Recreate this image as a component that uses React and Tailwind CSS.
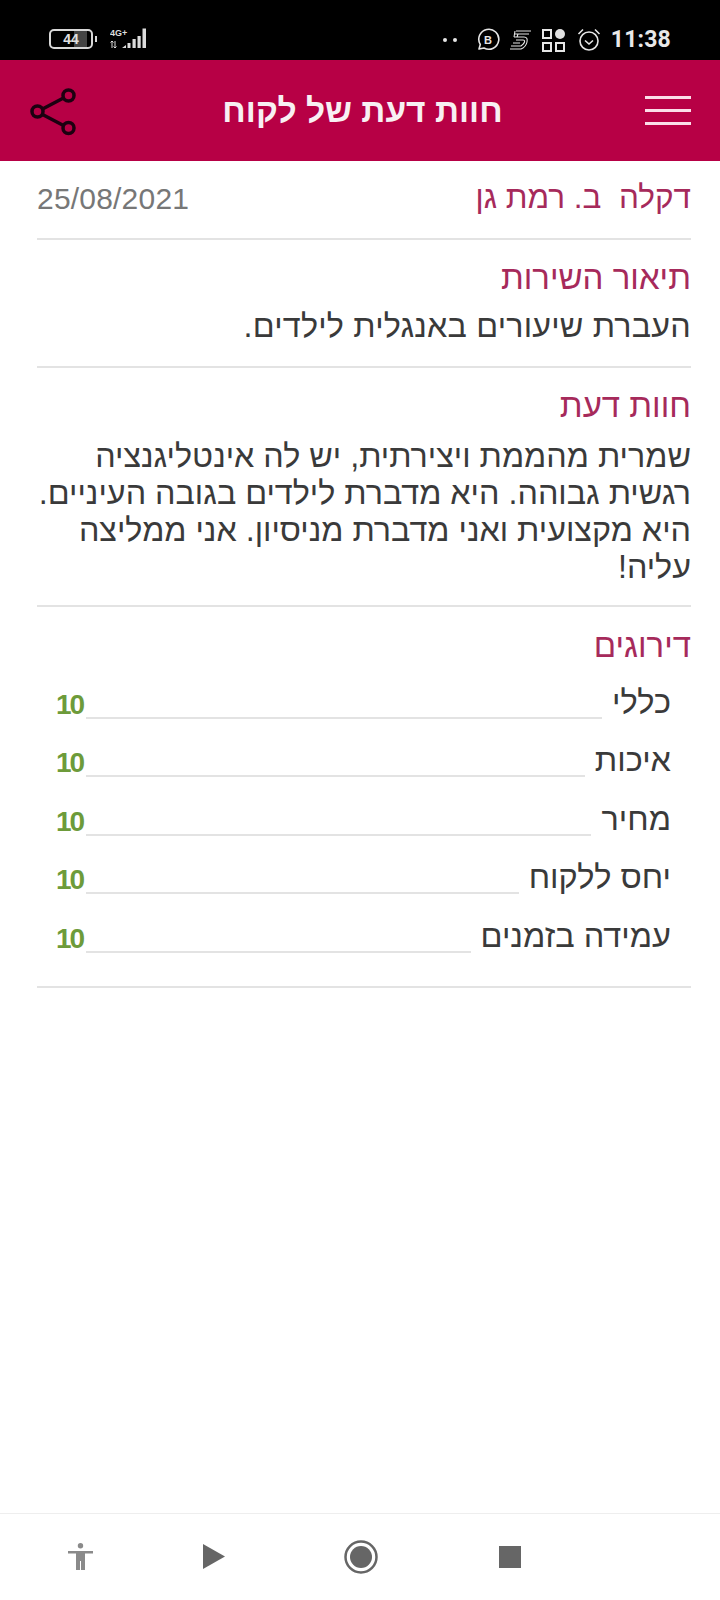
const font = { fontFamily: '"Liberation Sans", "DejaVu Sans", sans-serif' };

function StatusLeft() {
  return (
    <div className="flex items-center gap-[13px]">
      <div className="flex items-center gap-[2px]">
        <div className="w-[44px] h-[20px] rounded-[5px] border-2 border-[#d8d8d8] flex items-center justify-center text-[#e0e0e0] text-[14px] font-bold leading-none" style={{ background: 'linear-gradient(90deg,#000 0 58%,#444 58% 90%,#000 90%)' }}>
          44
        </div>
        <div className="w-[2px] h-[6px] bg-[#d8d8d8]" />
      </div>
      <svg width="40" height="24" viewBox="0 0 40 24" fill="#dcdcdc">
        <text x="0" y="9" fontSize="9" fontWeight="700" fontFamily="Liberation Sans">4G+</text>
        <path d="M2 14v7M5 21v-7M0.500 15.500 2 14l1.500 1.500M3.500 19.500 5 21l1.500-1.500" stroke="#dcdcdc" strokeWidth="1" fill="none" />
        <path d="M12 21l4-3v3zM17.500 21v-5h3v5zM22.500 21v-9h3.200v9zM27.500 21V9h3.200v12zM32.500 21V1.500h3.500V21z" />
      </svg>
    </div>
  );
}

function StatusRight() {
  return (
    <div className="flex items-center mt-[3px]">
      <div className="flex gap-[6px] mr-[19px]">
        <span className="w-[4px] h-[4px] bg-[#e6e6e6] rounded-full" />
        <span className="w-[4px] h-[4px] bg-[#e6e6e6] rounded-full" />
      </div>
      <svg width="24" height="24" viewBox="0 0 24 24" fill="none" className="mr-[9px]">
        <path d="M3 21l1.300-4.500A10 10 0 1 1 8 20z" stroke="#e6e6e6" strokeWidth="1.600" strokeLinejoin="round" />
        <text x="12" y="16" textAnchor="middle" fontSize="11" fontWeight="700" fill="#e6e6e6" fontFamily="Liberation Sans">B</text>
      </svg>
      <svg width="22" height="22" viewBox="0 0 22 22" fill="none" stroke="#e6e6e6" strokeWidth="1.100" className="mr-[11px]">
        <path d="M7 2h15M6 5h14M5 8l1-6M8 8l1-3M5 8h10q4 0 3 5t-6 7H1M7 11h7q2 0 1.500 2t-3.500 4H2M4 14h7" />
      </svg>
      <div className="grid grid-cols-2 gap-[3px] mr-[12px]">
        <span className="w-[10px] h-[10px] border-2 border-[#e6e6e6]" />
        <span className="w-[10px] h-[10px] bg-[#e0e0e0] rounded-full" />
        <span className="w-[10px] h-[10px] border-2 border-[#e6e6e6]" />
        <span className="w-[10px] h-[10px] border-2 border-[#e6e6e6]" />
      </div>
      <svg width="24" height="24" viewBox="0 0 24 24" fill="none" stroke="#e6e6e6" strokeWidth="1.600" className="mr-[10px]">
        <circle cx="12" cy="13" r="9" />
        <path d="M8 12.500l4 3.500 4-3.500M1.500 6 6 1.500M22.500 6 18 1.500" />
      </svg>
      <span className="text-[#e8e8e8] text-[23px] font-bold tracking-[0.2px] mt-[1px]" style={{ fontFamily: 'Roboto, sans-serif' }}>11:38</span>
    </div>
  );
}

function ShareIcon() {
  return (
    <svg width="50" height="50" viewBox="0 0 50 50" fill="none" stroke="#1c0010" strokeWidth="3.500">
      <circle cx="38.500" cy="9.500" r="5.500" />
      <circle cx="38.500" cy="42" r="5.500" />
      <circle cx="7.500" cy="25.500" r="5.500" />
      <path d="M12.500 23 33.500 12M12.500 28.500 33.500 39.500" />
    </svg>
  );
}

function Rating({ label }) {
  return (
    <div dir="rtl" className="flex items-end h-[58.5px] pr-[20px] pl-[19px]">
      <span className="text-[32.5px] leading-[36px] text-[#3a3a3a] whitespace-nowrap ml-[10px] -mb-[1px]">{label}</span>
      <div className="flex-1 border-b-2 border-[#e3e3e3]" />
      <span className="text-[28px] leading-[30px] font-bold text-[#6d9b3a] tracking-[-2px] -mb-[1px] mr-[3px]">10</span>
    </div>
  );
}

function Section({ title, children, className = '' }) {
  return (
    <section dir="rtl" className={`border-b-2 border-[#e3e3e3] ${className}`}>
      <h2 className="text-[33px] leading-[36px] text-[#a62a5b] font-normal">{title}</h2>
      {children}
    </section>
  );
}

export default function App() {
  return (
    <div className="w-[720px] h-[1600px] bg-white flex flex-col overflow-hidden" style={font}>
      <div className="h-[60px] bg-black flex items-center justify-between pl-[49px] pr-[49px] shrink-0 pt-[17px]">
        <StatusLeft />
        <StatusRight />
      </div>
      <header className="h-[101px] bg-[#b70045] flex items-center justify-between pl-[30px] pr-[29px] shrink-0">
        <ShareIcon />
        <h1 dir="rtl" className="text-[33.500px] leading-none font-bold text-[#f8f0f3]">חוות דעת של לקוח</h1>
        <div className="w-[46px] flex flex-col gap-[10.500px]">
          <span className="h-[2.500px] bg-[#fbdde8]" />
          <span className="h-[2.500px] bg-[#fbdde8]" />
          <span className="h-[2.500px] bg-[#fbdde8]" />
        </div>
      </header>
      <main className="flex-1 ml-[37px] mr-[29px] min-h-0">
        <div dir="rtl" className="flex items-center justify-between h-[79px] border-b-2 border-[#e3e3e3] pb-[4px]">
          <span className="text-[31.500px] text-[#a62a5b] whitespace-pre">דקלה  ב. רמת גן</span>
          <span className="text-[30px] text-[#777777] tracking-[0.2px] mt-[2px]" dir="ltr">25/08/2021</span>
        </div>
        <Section title="תיאור השירות" className="h-[128px] pt-[20px]">
          <p className="text-[32.300px] leading-[37px] tracking-[0.2px] text-[#3a3a3a] mt-[12px]">העברת שיעורים באנגלית לילדים.</p>
        </Section>
        <Section title="חוות דעת" className="h-[239px] pt-[20px]">
          <p className="text-[32.300px] leading-[37px] text-[#3a3a3a] mt-[14px]">
            שמרית מהממת ויצירתית, יש לה אינטליגנציה רגשית גבוהה. היא מדברת לילדים בגובה העיניים. היא מקצועית ואני מדברת מניסיון. אני ממליצה עליה!
          </p>
        </Section>
        <Section title="דירוגים" className="h-[381px] pt-[21px]">
          <div className="-mt-[4px]">
            <Rating label="כללי" />
            <Rating label="איכות" />
            <Rating label="מחיר" />
            <Rating label="יחס ללקוח" />
            <Rating label="עמידה בזמנים" />
          </div>
        </Section>
      </main>
      <nav className="h-[87px] border-t border-[#eeeeee] flex items-center pl-[68px] shrink-0">
        <svg width="25" height="28" viewBox="0 0 25 28" fill="#8a8a8a" className="mr-[110px]">
          <circle cx="12.500" cy="2.700" r="2.700" />
          <path d="M0 8h25v2.500h-8V27h-4v-9h-1v9H8V10.500H0z" />
        </svg>
        <svg width="22" height="26" viewBox="0 0 22 26" fill="#666666" className="mr-[119px]">
          <path d="M0 0l22 12.500L0 25z" />
        </svg>
        <svg width="34" height="34" viewBox="0 0 34 34" className="mr-[121px]">
          <circle cx="17" cy="17" r="15.500" fill="none" stroke="#666666" strokeWidth="2.500" />
          <circle cx="17" cy="17" r="11" fill="#666666" />
        </svg>
        <div className="w-[22px] h-[22px] bg-[#666666]" />
      </nav>
    </div>
  );
}
